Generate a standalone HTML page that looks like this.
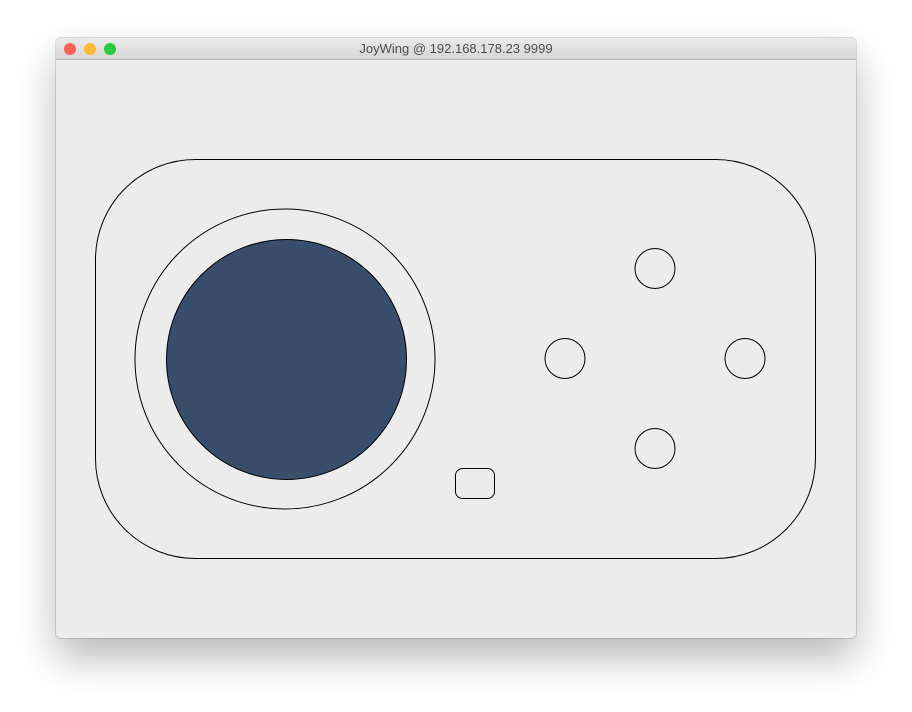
<!DOCTYPE html>
<html><head><meta charset="utf-8"><style>
html,body{margin:0;padding:0;width:912px;height:712px;background:#fff;overflow:hidden}
.win{position:absolute;left:56px;top:38px;width:800px;height:600px;border-radius:5px;background:#ececec;box-shadow:0 20px 40px rgba(0,0,0,0.28),0 0 0 1px rgba(0,0,0,0.12);overflow:hidden}
.tb{position:absolute;left:0;top:0;width:800px;height:21px;background:linear-gradient(#ebebeb,#d6d6d6);border-bottom:1px solid #b8b8b8;font:13px "Liberation Sans",sans-serif;color:#4d4d4d;text-align:center;line-height:21px}
.d{position:absolute;top:5px;width:12px;height:12px;border-radius:50%}
</style></head><body>
<div class="win">
<div class="tb">JoyWing @ 192.168.178.23 9999
<div class="d" style="left:8px;background:#fe5f57"></div>
<div class="d" style="left:28px;background:#febc2e"></div>
<div class="d" style="left:48px;background:#28c840"></div>
</div>
</div>
<svg style="position:absolute;left:0;top:0" width="912" height="712">
<g fill="none" stroke="#000" stroke-width="1">
<rect x="95.5" y="159.5" width="720" height="399" rx="100" ry="100"/>
<circle cx="285" cy="359" r="150"/>
<circle cx="286.5" cy="359.5" r="120" fill="#384e6b"/>
<circle cx="655" cy="268.5" r="20"/>
<circle cx="565" cy="358.5" r="20"/>
<circle cx="745" cy="358.5" r="20"/>
<circle cx="655" cy="448.5" r="20"/>
<rect x="455.5" y="468.5" width="39" height="30" rx="7"/>
</g></svg>
</body></html>
